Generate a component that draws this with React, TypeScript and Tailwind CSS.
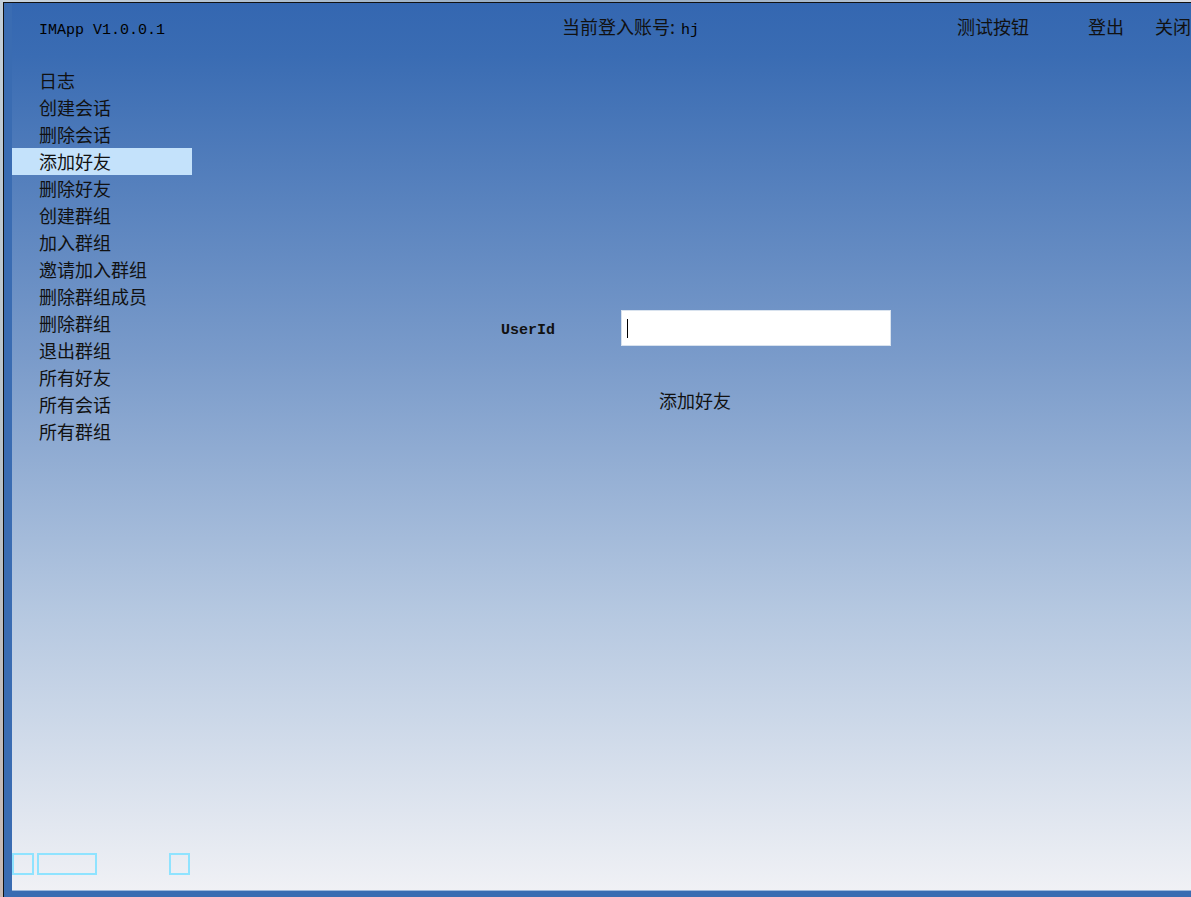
import React, { useState } from 'react';

const cjk = "font-['Noto_Sans_CJK_SC','Noto_Sans',sans-serif]";
const mono = "font-['Liberation_Mono','Noto_Sans_CJK_SC',monospace]";

const menuItems = [
  '日志',
  '创建会话',
  '删除会话',
  '添加好友',
  '删除好友',
  '创建群组',
  '加入群组',
  '邀请加入群组',
  '删除群组成员',
  '删除群组',
  '退出群组',
  '所有好友',
  '所有会话',
  '所有群组',
];

export default function App() {
  const [active, setActive] = useState('添加好友');
  const [userId, setUserId] = useState('');

  return (
    <div className="relative w-[1191px] h-[897px] overflow-hidden bg-[#a9bccb]">
      {/* desktop strip behind the window */}
      <div className="absolute left-0 top-0 h-[2px] w-full bg-gradient-to-r from-[#c9d3dc] via-[#8fa6bf] to-[#d8dde3]" />
      <div className="absolute left-0 top-0 h-full w-[3px] bg-gradient-to-b from-[#c3cfd9] via-[#b9c3c9] to-[#c9b9b2]" />

      {/* app window */}
      <div className="absolute left-[3px] top-[2px] w-[1240px] h-[895px] border-l border-t border-[#111] bg-[#3a6cb2] pl-[8px] pb-[6px] flex">
        <div className="flex-1 flex flex-col bg-[linear-gradient(to_bottom,#3467b1_0%,#3a6cb3_6%,#7a9bca_40%,#b4c7e0_68%,#f0f1f5_100%)] text-[#111]">
          {/* header */}
          <div className="h-[52px] flex items-baseline pt-[10px] pl-[27px]">
            <div className={`w-[523px] text-[15px] text-black ${mono}`}>IMApp V1.0.0.1</div>
            <div className="w-[395px] flex items-baseline">
              <span className={`text-[18px] ${cjk}`}>当前登入账号:</span>
              <span className={`ml-[6px] text-[15px] text-black ${mono}`}>hj</span>
            </div>
            <button className={`w-[131px] text-left text-[18px] ${cjk}`}>测试按钮</button>
            <button className={`w-[67px] text-left text-[18px] ${cjk}`}>登出</button>
            <button className={`w-[60px] text-left text-[18px] ${cjk}`}>关闭</button>
          </div>

          {/* body */}
          <div className="flex-1 flex">
            <ul className="w-[180px] pt-[12px]">
              {menuItems.map((item) => (
                <li
                  key={item}
                  onClick={() => setActive(item)}
                  className={`h-[27px] leading-[27px] pl-[27px] text-[18px] cursor-pointer ${cjk} ${
                    active === item ? 'bg-[#c4e2fb]' : ''
                  }`}
                >
                  {item}
                </li>
              ))}
            </ul>

            <div className="flex-1 flex flex-col pt-[255px]">
              <div className="flex items-center ml-[309px]">
                <label className={`w-[120px] pt-[6px] text-[15px] font-bold ${mono}`}>UserId</label>
                <div className="relative w-[270px] h-[36px]">
                  <input
                    value={userId}
                    onChange={(e) => setUserId(e.target.value)}
                    className="w-full h-full bg-white border border-[#d8e2ee] pl-[8px] text-[15px] outline-none caret-black"
                  />
                  {userId === '' && (
                    <span className="absolute left-[6px] top-[9px] w-[1px] h-[19px] bg-black pointer-events-none" />
                  )}
                </div>
              </div>
              <button className={`self-start ml-[467px] mt-[41px] leading-[27px] text-[18px] ${cjk}`}>
                添加好友
              </button>
            </div>
          </div>

          {/* bottom status boxes */}
          <div className="flex items-end pb-[15px]">
            <div className="w-[22px] h-[22px] border-2 border-[#8fe3ff]" />
            <div className="ml-[3px] w-[60px] h-[22px] border-2 border-[#8fe3ff]" />
            <div className="ml-[72px] w-[21px] h-[22px] border-2 border-[#8fe3ff]" />
          </div>
          <div className="h-[1px] bg-[#9db7db]" />
        </div>
      </div>
    </div>
  );
}
